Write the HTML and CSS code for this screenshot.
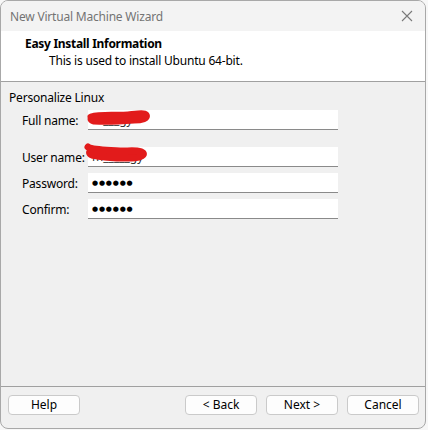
FILE: index.html
```html
<!DOCTYPE html>
<html>
<head>
<meta charset="utf-8">
<link rel="stylesheet" href="styles.css">
</head>
<body>
<div class="window">
  <div class="titlebar">
    <span class="title">New Virtual Machine Wizard</span>
    <svg class="close" width="12" height="12" viewBox="0 0 12 12"><path d="M1 1 L11 11 M11 1 L1 11" stroke="#7a7a7a" stroke-width="1.1" fill="none"/></svg>
  </div>
  <div class="header">
    <div class="h-title">Easy Install Information</div>
    <div class="h-sub">This is used to install Ubuntu 64-bit.</div>
  </div>
  <div class="content">
    <div class="section">Personalize Linux</div>
    <div class="row first">
      <label class="lbl">Full name:</label>
      <div class="input">
        <span class="hidden-text">m___gy</span>
        <svg class="scribble" width="70" height="20" viewBox="0 0 70 20"><path d="M5 7 C15 4, 30 6, 42 5 C52 4, 58 3, 60 5 C62 8, 56 10, 48 10 C36 11, 22 12, 8 11 C4 10, 4 8, 8 7" stroke="#e21b1b" stroke-width="7" fill="#e21b1b" stroke-linecap="round" stroke-linejoin="round"/></svg>
      </div>
    </div>
    <div class="row second">
      <label class="lbl">User name:</label>
      <div class="input">
        <span class="hidden-text">m_____gy</span>
        <svg class="scribble two" width="70" height="22" viewBox="0 0 70 22"><path d="M4 5 C8 8, 22 8, 36 9 C48 9, 56 8, 59 11 C61 14, 54 16, 44 16 C30 16, 16 15, 8 13 C5 12, 5 10, 7 9" stroke="#e21b1b" stroke-width="7" fill="#e21b1b" stroke-linecap="round" stroke-linejoin="round"/></svg>
      </div>
    </div>
    <div class="row">
      <label class="lbl">Password:</label>
      <div class="input"><span class="dots">●●●●●●</span></div>
    </div>
    <div class="row">
      <label class="lbl">Confirm:</label>
      <div class="input"><span class="dots">●●●●●●</span></div>
    </div>
  </div>
  <div class="footer">
    <button class="btn">Help</button>
    <div class="spacer"></div>
    <button class="btn">&lt; Back</button>
    <button class="btn">Next &gt;</button>
    <button class="btn">Cancel</button>
  </div>
</div>
</body>
</html>
```
FILE: styles.css
```css
html, body {
  margin: 0;
  padding: 0;
  background: #f7f7f7;
}
body {
  font-family: "Noto Sans", "Open Sans", sans-serif;
  font-size: 12px;
  color: #000;
}
.window {
  width: 424px;
  height: 427px;
  border: 1px solid #a8a8a8;
  border-radius: 8px;
  background: #f0f0f0;
  overflow: hidden;
  display: flex;
  flex-direction: column;
}
.titlebar {
  height: 30px;
  display: flex;
  align-items: center;
  justify-content: space-between;
  padding: 0 10px 0 9px;
  background: #f3f3f3;
}
.title {
  color: #737373;
  font-size: 12px;
  letter-spacing: -0.2px;
}
.close {
  margin-right: 2px;
}
.header {
  height: 51px;
  background: #fff;
  border-bottom: 1px solid #a0a0a0;
  box-sizing: border-box;
  padding-top: 5px;
}
.h-title {
  font-weight: bold;
  margin-left: 24px;
  line-height: 16px;
  letter-spacing: -0.3px;
}
.h-sub {
  margin-left: 48px;
  line-height: 16px;
  margin-top: 1px;
  letter-spacing: -0.2px;
}
.content {
  flex: 1;
  padding-top: 8px;
  border-bottom: 1px solid #a0a0a0;
}
.section {
  margin-left: 8px;
  line-height: 16px;
  letter-spacing: -0.2px;
}
.row {
  display: flex;
  align-items: center;
  margin-left: 21px;
  margin-top: 6px;
}
.row.first { margin-top: 4px; }
.row.second { margin-top: 17px; }
.lbl {
  width: 66px;
  letter-spacing: -0.2px;
}
.input {
  position: relative;
  width: 250px;
  height: 20px;
  background: #fff;
  border-bottom: 1px solid #8a8a8a;
  box-sizing: border-box;
  display: flex;
  align-items: center;
  padding-left: 4px;
}
.hidden-text {
  color: #333;
  font-size: 12px;
}
.scribble {
  position: absolute;
  left: -2px;
  top: 0;
}
.scribble.two {
  left: -4px;
  top: -5px;
}
.dots {
  font-size: 7px;
  letter-spacing: 0.8px;
  font-family: "DejaVu Sans", sans-serif;
}
.footer {
  height: 33px;
  display: flex;
  align-items: flex-start;
  padding: 8px 6px 0 7px;
  gap: 9px;
}
.spacer { flex: 1; }
.btn {
  width: 72px;
  height: 20px;
  border: 1px solid #cacaca;
  border-radius: 4px;
  background: #fdfdfd;
  font-family: "Noto Sans", "Open Sans", sans-serif;
  font-size: 12px;
  color: #000;
  padding: 0;
  line-height: 16px;
}
```
